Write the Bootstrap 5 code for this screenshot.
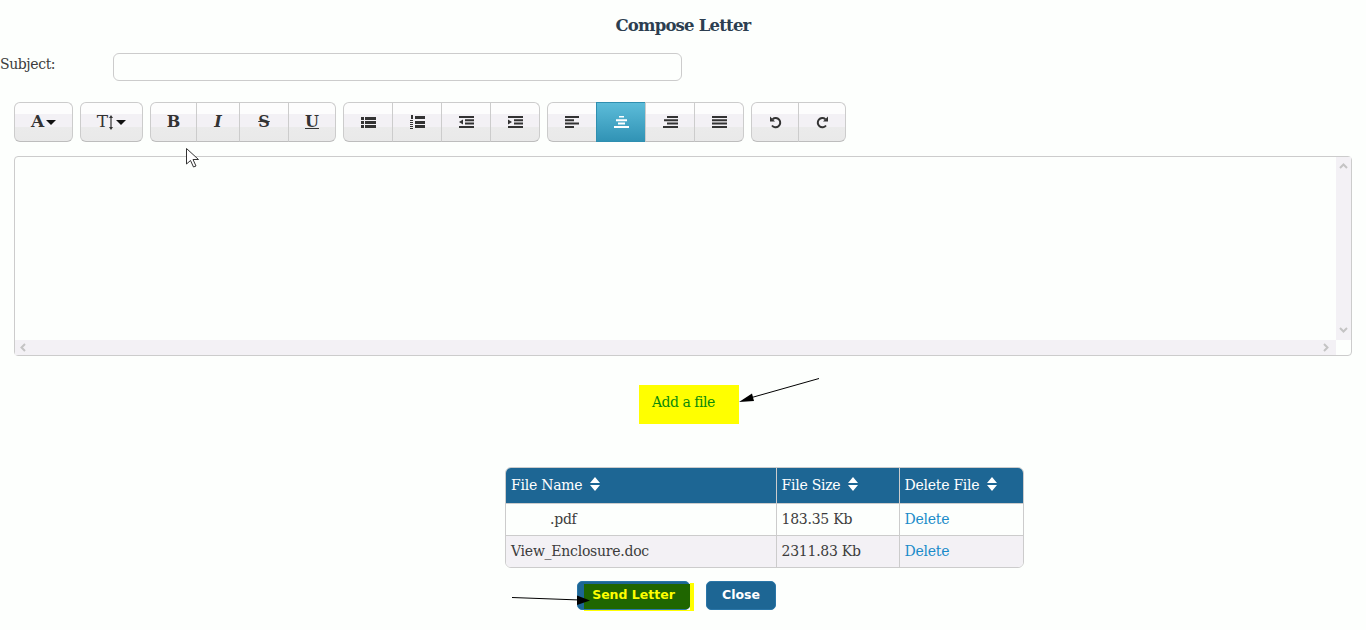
<!DOCTYPE html>
<html lang="en">
<head>
  <meta charset="UTF-8">
  <meta name="viewport" content="width=device-width, initial-scale=1">
  <title>Compose Letter</title>
  <link href="https://cdn.jsdelivr.net/npm/bootstrap@5.3.0/dist/css/bootstrap.min.css" rel="stylesheet">
  <style>
    body {
      background-color: #fdfffd;
      color: #3c3c3c;
      font-family: "DejaVu Serif", "Liberation Serif", serif;
      font-size: 14px;
      letter-spacing: -0.25px;
      height: 630px;
      overflow: hidden;
      position: relative;
    }
    .page-title {
      color: #2c3e50;
      font-size: 16.5px;
      letter-spacing: -0.8px;
      font-weight: 700;
      line-height: 20px;
      padding-top: 16px;
      margin: 0 0 17px;
      text-align: center;
    }
    .subject-row { height: 28px; }
    .subject-label { width: 113px; margin: 0; line-height: 22px; align-self: flex-start; letter-spacing: -0.4px; }
    .subject-input {
      width: 569px;
      height: 28px;
      border: 1px solid #ccc;
      border-radius: 6px;
      background: #fdfffd;
    }
    .tool-bar { margin: 21px 0 14px 14px; gap: 7px; }
    .tool-btn {
      height: 40px;
      padding: 0;
      display: flex;
      align-items: center;
      justify-content: center;
      color: #333;
      border: 1px solid #ccc;
      border-bottom-color: #bdbdbd;
      background: linear-gradient(#fdfdfd 0, #fdfdfd 11px, #f3f1f5 11px, #f3f1f5 24px, #ebebeb 24px, #e9e9e9 100%);
      font-size: 16px;
      font-weight: 700;
      font-family: "DejaVu Serif", serif;
    }
    .tool-btn:hover { color: #333; border-color: #ccc; }
    .tool-btn.dropdown-toggle::after { margin-left: 2px; border-top-color: #111; border-width: 5px 5px 0; }
    .tool-btn.on {
      background: linear-gradient(#5cbcd9, #3193b5);
      border-color: #2f8fb0;
    }
    .tool-big { font-size: 17px; }
    .tool-thin { font-size: 17px; font-weight: 400; }
    .w44 { width: 44px; }
    .w47 { width: 47px; }
    .w48 { width: 48px; }
    .w50 { width: 50px; }
    .w59 { width: 59px; }
    .w63 { width: 63px; }
    .editor-box {
      margin-left: 14px;
      width: 1338px;
      height: 200px;
      border: 1px solid #ccc;
      border-radius: 4px;
      display: grid;
      grid-template-columns: 1fr 15px;
      grid-template-rows: 1fr 15px;
    }
    .scroll-v, .scroll-h { background: #f3f1f5; display: flex; justify-content: space-between; align-items: center; }
    .scroll-v { flex-direction: column; padding: 6px 0 7px; }
    .scroll-h { padding: 0 7px 0 5px; }
    .add-row { height: 39px; margin: 29px 0 43px 639px; }
    .add-file {
      width: 100px;
      height: 39px;
      background: #ffff00;
      color: #0a8a0a;
      padding: 7px 0 0 13px;
      letter-spacing: -0.5px;
    }
    .files-wrap {
      width: 519px;
      margin-left: 505px;
      border: 1px solid #ccc;
      border-radius: 6px;
      overflow: hidden;
    }
    .files-table { margin: 0; font-size: 14px; table-layout: fixed; --bs-table-bg: transparent; color: #3c3c3c; }
    .files-table th, .files-table td { padding: 0 5px; border: 0 solid #ccc; border-right-width: 1px; border-bottom-width: 1px; vertical-align: middle; }
    .files-table tr > :last-child { border-right-width: 0; }
    .files-table tbody tr:last-child td { border-bottom-width: 0; }
    .files-table th { background: #1d6694; color: #fff; font-weight: 400; height: 35px; }
    .files-table td { height: 32px; }
    .files-table tbody tr:nth-child(2) td { background: #f3f1f5; }
    .files-table a { color: #1a8bc9; text-decoration: none; }
    .col-name { width: 270px; }
    .col-size { width: 123px; }
    .sort-mark { display: inline-block; vertical-align: -1px; margin-left: 3px; }
    .pad-name { padding-left: 44px !important; }
    .foot-btns { margin: 13px 0 0 577px; gap: 16px; }
    .act-btn {
      background: #1d6694;
      border: 1px solid #2a76a8;
      border-radius: 5px;
      color: #fff;
      font-family: "DejaVu Sans", sans-serif;
      font-size: 12.5px;
      letter-spacing: 0;
      font-weight: 700;
      height: 29px;
      padding: 0;
    }
    .act-btn:hover { background: #1d6694; color: #fff; }
    .send-btn { width: 113px; position: relative; }
    .send-btn span { position: relative; color: #ffff00; }
    .close-btn { width: 70px; }
    .mark-green {
      position: absolute;
      left: 6px; top: 2px;
      width: 106px; height: 25px;
      background: #1f6600;
      border-radius: 0 0 4px 0;
    }
    .over-art { position: absolute; left: 0; top: 0; pointer-events: none; }
  </style>
</head>
<body>
  <h1 class="page-title">Compose Letter</h1>

  <div class="d-flex subject-row">
    <label class="subject-label" for="subject">Subject:</label>
    <input id="subject" class="subject-input" type="text">
  </div>

  <!-- toolbar -->
  <div class="d-flex tool-bar">
    <div class="btn-group">
      <button type="button" class="btn tool-btn tool-big w59 dropdown-toggle">A</button>
    </div>
    <div class="btn-group">
      <button type="button" class="btn tool-btn tool-thin w63 dropdown-toggle">T<svg width="6" height="15" viewBox="0 0 6 15"><path d="M3 0 5 3H3.6V12H5L3 15 1 12H2.4V3H1Z" fill="#333"/></svg></button>
    </div>
    <div class="btn-group">
      <button type="button" class="btn tool-btn w47">B</button>
      <button type="button" class="btn tool-btn w44"><i>I</i></button>
      <button type="button" class="btn tool-btn w50"><s>S</s></button>
      <button type="button" class="btn tool-btn w48"><u>U</u></button>
    </div>
    <div class="btn-group">
      <button type="button" class="btn tool-btn w50"><svg width="15" height="11" viewBox="0 0 15 11" fill="#333"><path d="M0 0h3v3H0zM4 0h11v3H4zM0 4h3v3H0zM4 4h11v3H4zM0 8h3v3H0zM4 8h11v3H4z"/></svg></button>
      <button type="button" class="btn tool-btn w50"><svg width="15" height="14" viewBox="0 0 15 14" fill="#333"><path d="M5 1h10v3H5zM5 6h10v3H5zM5 10h10v3H5zM1 0h2v4H1zM0 5h3v1H0zM0 7h3v1H0zM0 9h3v1H0zM0 11h3v1H0zM0 13h3v1H0z"/></svg></button>
      <button type="button" class="btn tool-btn w50"><svg width="15" height="12" viewBox="0 0 15 12" fill="#333"><path d="M0 0h15v2H0zM6 3.300h9v2H6zM6 6.600h9v2H6zM0 10h15v2H0zM4 3.500v5L0 6z"/></svg></button>
      <button type="button" class="btn tool-btn w50"><svg width="15" height="12" viewBox="0 0 15 12" fill="#333"><path d="M0 0h15v2H0zM6 3.300h9v2H6zM6 6.600h9v2H6zM0 10h15v2H0zM0 3.500v5L4 6z"/></svg></button>
    </div>
    <div class="btn-group">
      <button type="button" class="btn tool-btn w50"><svg width="15" height="12" viewBox="0 0 15 12" fill="#333"><path d="M0 0h14v2H0zM0 3.300h9v2H0zM0 6.600h14v2H0zM0 10h9v2H0z"/></svg></button>
      <button type="button" class="btn tool-btn w50 on"><svg width="15" height="12" viewBox="0 0 15 12" fill="#fff"><path d="M5 0h5v1.500H5zM2 3.300h11v2H2zM4 6.600h7v2H4zM0 10h15v2H0z"/></svg></button>
      <button type="button" class="btn tool-btn w50"><svg width="15" height="12" viewBox="0 0 15 12" fill="#333"><path d="M4 0h11v2H4zM1 3.300h14v2H1zM4 6.600h11v2H4zM0 10h15v2H0z"/></svg></button>
      <button type="button" class="btn tool-btn w50"><svg width="15" height="12" viewBox="0 0 15 12" fill="#333"><path d="M0 0h15v2H0zM0 3.300h15v2H0zM0 6.600h15v2H0zM0 10h15v2H0z"/></svg></button>
    </div>
    <div class="btn-group">
      <button type="button" class="btn tool-btn w48"><svg width="13" height="13" viewBox="0 0 13 13" fill="none" stroke="#333" stroke-width="2"><path d="M3.600 3.200A4.600 4.600 0 1 1 3 9.500"/><path d="M1 .5v5h5z" fill="#333" stroke="none"/></svg></button>
      <button type="button" class="btn tool-btn w48"><svg width="13" height="13" viewBox="0 0 13 13" fill="none" stroke="#333" stroke-width="2"><path d="M9.400 3.200A4.600 4.600 0 1 0 10 9.500"/><path d="M12 .5v5H7z" fill="#333" stroke="none"/></svg></button>
    </div>
  </div>

  <!-- editor with scrollbars -->
  <div class="editor-box">
    <div></div>
    <div class="scroll-v">
      <svg width="9" height="6" viewBox="0 0 9 6" fill="none" stroke="#c4c4c4" stroke-width="2"><path d="M1 5l3.500-3.500L8 5"/></svg>
      <svg width="9" height="6" viewBox="0 0 9 6" fill="none" stroke="#c4c4c4" stroke-width="2"><path d="M1 1l3.500 3.500L8 1"/></svg>
    </div>
    <div class="scroll-h">
      <svg width="6" height="9" viewBox="0 0 6 9" fill="none" stroke="#c4c4c4" stroke-width="2"><path d="M5 1L1.500 4.500 5 8"/></svg>
      <svg width="6" height="9" viewBox="0 0 6 9" fill="none" stroke="#c4c4c4" stroke-width="2"><path d="M1 1l3.500 3.500L1 8"/></svg>
    </div>
    <div></div>
  </div>

  <div class="add-row">
    <div class="add-file">Add a file</div>
  </div>

  <div class="files-wrap">
    <table class="table files-table">
      <colgroup><col class="col-name"><col class="col-size"><col></colgroup>
      <thead>
        <tr>
          <th>File Name <svg class="sort-mark" width="10" height="14" viewBox="0 0 10 14" fill="#fff"><path d="M5 0l5 6H0zM5 14L0 8h10z"/></svg></th>
          <th>File Size <svg class="sort-mark" width="10" height="14" viewBox="0 0 10 14" fill="#fff"><path d="M5 0l5 6H0zM5 14L0 8h10z"/></svg></th>
          <th>Delete File <svg class="sort-mark" width="10" height="14" viewBox="0 0 10 14" fill="#fff"><path d="M5 0l5 6H0zM5 14L0 8h10z"/></svg></th>
        </tr>
      </thead>
      <tbody>
        <tr><td class="pad-name">.pdf</td><td>183.35 Kb</td><td><a href="#">Delete</a></td></tr>
        <tr><td>View_Enclosure.doc</td><td>2311.83 Kb</td><td><a href="#">Delete</a></td></tr>
      </tbody>
    </table>
  </div>

  <div class="d-flex foot-btns">
    <button type="button" class="btn act-btn send-btn"><i class="mark-green"></i><span>Send Letter</span></button>
    <button type="button" class="btn act-btn close-btn">Close</button>
  </div>

  <!-- annotations drawn over the page -->
  <svg class="over-art" width="1366" height="630" viewBox="0 0 1366 630">
    <path d="M690 583h4v28h-110v-1h106z" fill="#ffff00"/>
    <path d="M819 378.500 750 398" stroke="#000" fill="none"/>
    <path d="M739 402 752 393.500 754 401z" fill="#000"/>
    <path d="M512 597.500 580 600" stroke="#000" fill="none"/>
    <path d="M590 600.500 577 595.500 577 605z" fill="#000"/>
    <path d="M186.500 148.500V164l4-3.500 3 6.500 2.500-1-3-6.500h5.500z" fill="#fff" stroke="#333" stroke-width="1"/>
  </svg>

  <script src="https://cdn.jsdelivr.net/npm/bootstrap@5.3.0/dist/js/bootstrap.bundle.min.js"></script>
</body>
</html>
